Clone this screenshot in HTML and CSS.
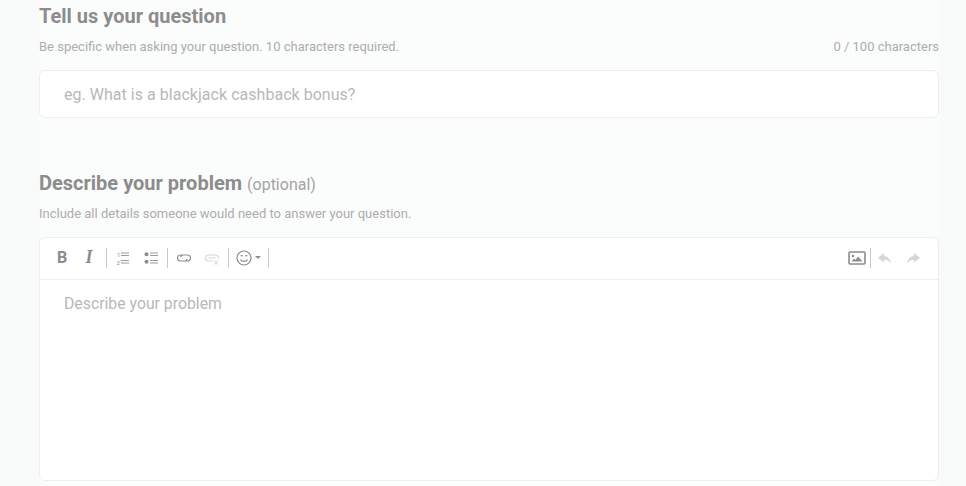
FILE: index.html
```html
<!DOCTYPE html>
<html lang="en">
<head>
  <meta charset="UTF-8">
  <title>Ask a question</title>
  <link rel="stylesheet" href="styles.css">
</head>
<body>
  <main class="form">
    <section class="campo campo-titulo">
      <h2>Tell us your question</h2>
      <div class="dica">
        <span>Be specific when asking your question. 10 characters required.</span>
        <span>0 / 100 characters</span>
      </div>
      <input class="entrada" type="text" placeholder="eg. What is a blackjack cashback bonus?">
    </section>

    <section class="campo">
      <h2>Describe your problem <small>(optional)</small></h2>
      <div class="dica">
        <span>Include all details someone would need to answer your question.</span>
      </div>
      <div class="editor">
        <div class="barra">
          <div class="grupo grupo-inicio">
            <span class="botao letra-b">B</span>
            <span class="botao letra-i">I</span>
          </div>
          <div class="grupo">
            <span class="botao">
              <svg width="14" height="14" viewBox="0 0 14 14">
                <text class="num" x="1" y="5.500">1</text>
                <text class="num" x="0.500" y="13.500">2</text>
                <path d="M5 2h8M5 4.500h8M5 9.500h8M5 12h8" stroke="#9a9a9a" stroke-width="1" fill="none"/>
              </svg>
            </span>
            <span class="botao">
              <svg width="14" height="14" viewBox="0 0 14 14">
                <circle cx="2.500" cy="3.200" r="2" fill="#8c8c8c"/>
                <circle cx="2.500" cy="10.700" r="2" fill="#8c8c8c"/>
                <path d="M6 2h8M6 4.500h8M6 9.500h8M6 12h8" stroke="#9a9a9a" stroke-width="1" fill="none"/>
              </svg>
            </span>
          </div>
          <div class="grupo">
            <span class="botao">
              <svg width="16" height="16" viewBox="0 0 16 16" fill="none" stroke="#8c8c8c" stroke-width="1.100">
                <path d="M6.500 5H4.500a3 3 0 0 0 0 6h4a3 3 0 0 0 2.800-2"/>
                <path d="M9.500 11h2a3 3 0 0 0 0-6h-4a3 3 0 0 0-2.800 2"/>
              </svg>
            </span>
            <span class="botao">
              <svg width="16" height="16" viewBox="0 0 16 16" fill="none" stroke="#d6d6d6" stroke-width="1.100">
                <path d="M9 11H4.500a3 3 0 0 1 0-6h7a3 3 0 0 1 3 3.500M4.500 8h7"/>
                <path d="M10.500 10.500l3.500 4M14 10.500l-3.500 4"/>
              </svg>
            </span>
          </div>
          <div class="grupo">
            <span class="botao botao-emoji">
              <svg width="16" height="16" viewBox="0 0 16 16" fill="none" stroke="#8c8c8c" stroke-width="1.200">
                <circle cx="8" cy="8" r="7"/>
                <path d="M4.500 9.500c1 2.600 6 2.600 7 0"/>
                <path d="M4.700 6.200c.6-.8 1.500-.8 2 0M9.300 6.200c.6-.8 1.500-.8 2 0"/>
              </svg>
              <i class="seta"></i>
            </span>
          </div>
          <div class="grupo grupo-direita">
            <span class="botao botao-imagem">
              <svg width="18" height="16" viewBox="0 0 18 16">
                <rect x="1" y="2" width="16" height="12" rx="1" fill="none" stroke="#8c8c8c" stroke-width="1.600"/>
                <circle cx="5" cy="6" r="1.200" fill="#8c8c8c"/>
                <path d="M3.500 11.500l2.500-3 1.500 1.500 2.500-3.500 4.500 5z" fill="#8c8c8c"/>
              </svg>
            </span>
          </div>
          <div class="grupo-fim">
            <span class="botao">
              <svg width="16" height="16" viewBox="0 0 16 16"><path d="M7 3L1 7.800 7 12.500V9.800c3 0 5 .9 7 3.700-.6-4.200-3-6.900-7-7.500z" fill="#d6d6d6"/></svg>
            </span>
            <span class="botao">
              <svg width="16" height="16" viewBox="0 0 16 16"><path d="M9 3l6 4.800L9 12.500V9.800c-3 0-5 .9-7 3.700.6-4.200 3-6.900 7-7.500z" fill="#d6d6d6"/></svg>
            </span>
          </div>
        </div>
        <div class="area">Describe your problem</div>
      </div>
    </section>
  </main>
</body>
</html>
```

FILE: styles.css
```css
* { box-sizing: border-box; }

html, body {
  margin: 0;
  height: 100%;
  overflow: hidden;
}

body {
  background: #f9fafa;
  font-family: Roboto, sans-serif;
}

.form {
  margin-left: 39px;
  width: 900px;
  height: 486px;
  background: #fbfcfc;
}

.campo-titulo {
  height: 171px;
  padding-top: 4px;
}

h2 {
  margin: 0;
  font-size: 20px;
  line-height: 24px;
  font-weight: 700;
  color: #8c8c8c;
}

h2 small {
  font-size: 16px;
  line-height: 1;
  font-weight: 400;
  color: #a3a3a3;
}

.dica {
  display: flex;
  justify-content: space-between;
  margin-top: 11px;
  margin-bottom: 15px;
  font-size: 13px;
  line-height: 16px;
  color: #adadad;
}

.entrada {
  display: block;
  width: 100%;
  height: 48px;
  padding: 0 24px;
  border: 1px solid #eeeeee;
  border-radius: 6px;
  background: #fff;
  font-family: Roboto, sans-serif;
  font-size: 16px;
  letter-spacing: 0.03px;
}

.entrada::placeholder {
  color: #b8b8b8;
  opacity: 1;
}

.editor {
  height: 244px;
  border: 1px solid #eeeeee;
  border-radius: 6px;
  background: #fff;
}

.barra {
  display: flex;
  align-items: center;
  height: 42px;
  padding: 0 11px 2px 8px;
  border-bottom: 1px solid #eeeeee;
}

.grupo {
  display: flex;
  align-items: center;
  height: 20px;
  padding: 0 2px;
  border-right: 1px solid #c9c9c9;
}

.grupo-inicio {
  padding-left: 0;
}

.grupo-direita {
  margin-left: auto;
  padding: 0 2px 0 0;
}

.grupo-fim {
  display: flex;
  align-items: center;
}

.botao {
  display: flex;
  align-items: center;
  justify-content: center;
  width: 28px;
  height: 20px;
}

.letra-b {
  font-size: 16px;
  font-weight: 700;
  color: #8c8c8c;
}

.letra-i {
  padding-right: 2px;
  font-family: "Liberation Serif", serif;
  font-size: 18px;
  font-style: italic;
  font-weight: 700;
  color: #8c8c8c;
}

.num {
  font-family: Roboto, sans-serif;
  font-size: 6px;
  fill: #8c8c8c;
}

.botao-emoji {
  width: 35px;
  justify-content: flex-start;
  padding-left: 5px;
}

.botao-imagem {
  width: 27px;
  padding-left: 4px;
}

.seta {
  margin-left: 3px;
  border-top: 3px solid #8c8c8c;
  border-left: 3px solid transparent;
  border-right: 3px solid transparent;
}

.area {
  padding: 14px 24px;
  font-size: 15.800px;
  line-height: 19px;
  color: #b8b8b8;
}
```
